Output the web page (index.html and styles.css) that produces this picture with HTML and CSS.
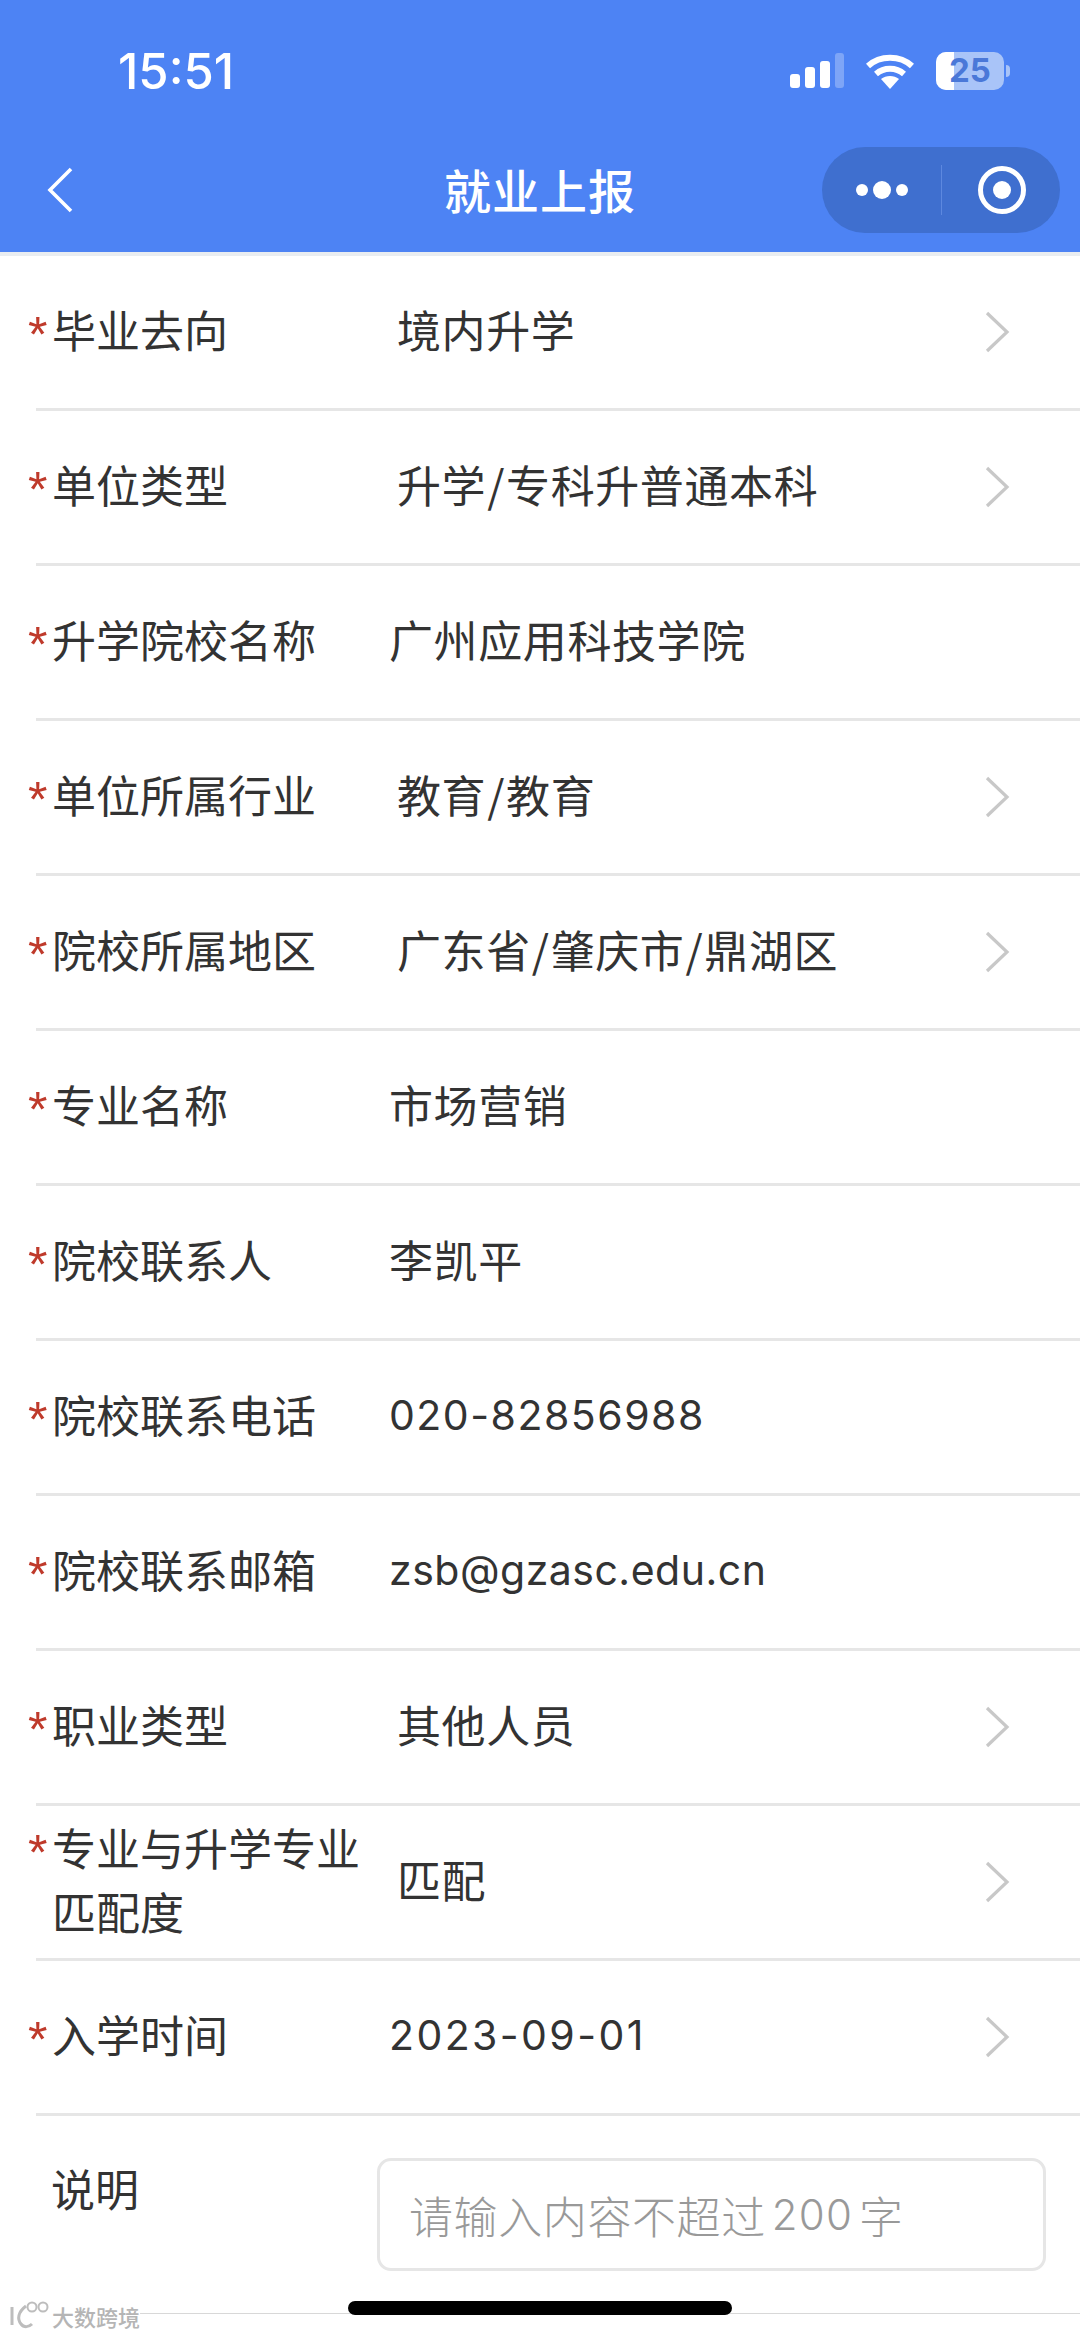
FILE: index.html
```html
<!DOCTYPE html>
<html lang="zh-CN">
<head>
<meta charset="utf-8">
<title>就业上报</title>
<link rel="stylesheet" href="styles.css">
</head>
<body>
<div class="screen">
  <header class="header">
    <div class="status">
      <span class="time">15:51</span>
      <div class="status-icons">
        <svg class="signal" width="54" height="36" viewBox="0 0 54 36"><rect x="0" y="21" width="10" height="14" rx="3" fill="#fff"/><rect x="15" y="14" width="10" height="21" rx="3" fill="#fff"/><rect x="30" y="8" width="10" height="27" rx="3" fill="#fff"/><rect x="45" y="0" width="9" height="35" rx="3" fill="#7ea5f7"/></svg>
        <svg class="wifi" width="48" height="36" viewBox="0 0 48 36"><path d="M2 13C14 2 34 2 46 13M10 21C18 14 30 14 38 21" fill="none" stroke="#fff" stroke-width="6"/><path d="M15 26C20 22 28 22 33 26L24 36Z" fill="#fff"/></svg>
        <div class="battery"><div class="battery-body"><div class="battery-fill"></div><span class="battery-num">25</span></div><div class="battery-tip"></div></div>
      </div>
    </div>
    <div class="nav">
      <svg class="back" width="26" height="46" viewBox="0 0 26 46"><path d="M24 2L3 23L24 44" fill="none" stroke="#fff" stroke-width="3.6"/></svg>
      <h1 class="title">就业上报</h1>
      <div class="capsule">
        <div class="dots"><i class="dot"></i><i class="dot dot-big"></i><i class="dot"></i></div>
        <div class="capsule-line"></div>
        <div class="target"><i class="target-core"></i></div>
      </div>
    </div>
  </header>
  <main class="form">
    <div class="row"><div class="label"><span class="star">*</span><span>毕业去向</span></div><div class="value select">境内升学</div><svg class="chev" width="26" height="42" viewBox="0 0 26 42"><path d="M3 2L23 21L3 40" fill="none" stroke="#c8c8c8" stroke-width="3.2"/></svg></div>
    <div class="row"><div class="label"><span class="star">*</span><span>单位类型</span></div><div class="value select">升学<span class="slash">/</span>专科升普通本科</div><svg class="chev" width="26" height="42" viewBox="0 0 26 42"><path d="M3 2L23 21L3 40" fill="none" stroke="#c8c8c8" stroke-width="3.2"/></svg></div>
    <div class="row"><div class="label"><span class="star">*</span><span>升学院校名称</span></div><div class="value">广州应用科技学院</div></div>
    <div class="row"><div class="label"><span class="star">*</span><span>单位所属行业</span></div><div class="value select">教育<span class="slash">/</span>教育</div><svg class="chev" width="26" height="42" viewBox="0 0 26 42"><path d="M3 2L23 21L3 40" fill="none" stroke="#c8c8c8" stroke-width="3.2"/></svg></div>
    <div class="row"><div class="label"><span class="star">*</span><span>院校所属地区</span></div><div class="value select">广东省<span class="slash">/</span>肇庆市<span class="slash">/</span>鼎湖区</div><svg class="chev" width="26" height="42" viewBox="0 0 26 42"><path d="M3 2L23 21L3 40" fill="none" stroke="#c8c8c8" stroke-width="3.2"/></svg></div>
    <div class="row"><div class="label"><span class="star">*</span><span>专业名称</span></div><div class="value">市场营销</div></div>
    <div class="row"><div class="label"><span class="star">*</span><span>院校联系人</span></div><div class="value">李凯平</div></div>
    <div class="row"><div class="label"><span class="star">*</span><span>院校联系电话</span></div><div class="value latin phone">020-82856988</div></div>
    <div class="row"><div class="label"><span class="star">*</span><span>院校联系邮箱</span></div><div class="value latin">zsb@gzasc.edu.cn</div></div>
    <div class="row"><div class="label"><span class="star">*</span><span>职业类型</span></div><div class="value select">其他人员</div><svg class="chev" width="26" height="42" viewBox="0 0 26 42"><path d="M3 2L23 21L3 40" fill="none" stroke="#c8c8c8" stroke-width="3.2"/></svg></div>
    <div class="row"><div class="label"><span class="star">*</span><span>专业与升学专业匹配度</span></div><div class="value select">匹配</div><svg class="chev" width="26" height="42" viewBox="0 0 26 42"><path d="M3 2L23 21L3 40" fill="none" stroke="#c8c8c8" stroke-width="3.2"/></svg></div>
    <div class="row"><div class="label"><span class="star">*</span><span>入学时间</span></div><div class="value latin date">2023-09-01</div><svg class="chev" width="26" height="42" viewBox="0 0 26 42"><path d="M3 2L23 21L3 40" fill="none" stroke="#c8c8c8" stroke-width="3.2"/></svg></div>
    <div class="note">
      <div class="note-label">说明</div>
      <div class="note-box">请输入内容不超过<span class="num">200</span>字</div>
    </div>
  </main>
  <div class="bottom-line"></div>
  <div class="home"></div>
  <div class="watermark"><svg width="40" height="30" viewBox="0 0 40 30"><path d="M2 6V24M16 5C8 11 7 18 11 23C14 27 19 26 22 23" fill="none" stroke="#bdbdbd" stroke-width="3"/><circle cx="22" cy="6" r="4.5" fill="none" stroke="#bdbdbd" stroke-width="2"/><circle cx="33" cy="6" r="4.5" fill="none" stroke="#bdbdbd" stroke-width="2"/></svg><span>大数跨境</span></div>
</div>
</body>
</html>
```
FILE: styles.css
```css
* { box-sizing: border-box; }
html, body { margin: 0; padding: 0; background: #fff; }
.screen {
  position: relative;
  width: 1080px;
  height: 2337px;
  overflow: hidden;
  font-family: "Inter", "Noto Sans CJK SC", sans-serif;
  color: #333;
}
.header { height: 252px; background: #4d83f4; color: #fff; display: flex; flex-direction: column; }
.status { height: 135px; display: flex; align-items: center; justify-content: space-between; padding: 16px 70px 8px 118px; }
.time { font-size: 49px; font-weight: 500; font-family: "Inter", sans-serif; }
.status-icons { display: flex; align-items: center; gap: 22px; margin-top: -2px; }
.battery { display: flex; align-items: center; gap: 2px; }
.battery-body { position: relative; width: 68px; height: 38px; border-radius: 10px; background: #a9c4f8; overflow: hidden; display: flex; align-items: center; justify-content: center; }
.battery-fill { position: absolute; left: 0; top: 0; bottom: 0; width: 18px; background: #fff; }
.battery-num { position: relative; font-size: 33px; font-weight: 700; line-height: 1; color: #4a78d8; }
.battery-tip { width: 4px; height: 12px; border-radius: 0 4px 4px 0; background: #a9c4f8; }
.nav { position: relative; flex: 1; display: flex; align-items: center; justify-content: space-between; padding: 0 20px 8px 47px; }
.title { position: absolute; left: 0; right: 0; top: 24px; margin: 0; text-align: center; font-size: 47px; line-height: 60px; font-weight: 500; letter-spacing: 1px; font-family: "Noto Sans CJK SC", sans-serif; }
.capsule { display: flex; align-items: center; width: 238px; height: 86px; border-radius: 43px; background: #3f6fcf; }
.dots { width: 119px; display: flex; align-items: center; justify-content: center; gap: 5px; }
.dot { width: 12px; height: 12px; border-radius: 50%; background: #fff; }
.dot-big { width: 18px; height: 18px; }
.capsule-line { width: 1px; height: 50px; background: #5d88df; }
.target { margin-left: 36px; width: 48px; height: 48px; border: 5px solid #fff; border-radius: 50%; display: flex; align-items: center; justify-content: center; }
.target-core { width: 18px; height: 18px; border-radius: 50%; background: #fff; }
.form { border-top: 4px solid #e9edf1; }
.row {
  height: 155px;
  margin-left: 36px;
  border-bottom: 3px solid #e6e6e6;
  display: flex;
  align-items: center;
  font-size: 44px;
  line-height: 64px;
  font-family: "Noto Sans CJK SC", sans-serif;
  font-weight: 400;
}
.label { width: 353px; margin-left: -8px; margin-right: 8px; flex: none; display: flex; align-items: flex-start; padding: 0 8px 7px 0; }
.star { width: 24px; flex: none; color: #bf3a2b; font-family: "Liberation Sans", sans-serif; font-size: 50px; line-height: 76px; height: 64px; }
.value { flex: 1; letter-spacing: 0.6px; padding-bottom: 7px; }
.slash { margin: 0 1px; }
.select { padding-left: 8px; }
.latin { font-family: "Inter", sans-serif; font-weight: 400; font-size: 41px; letter-spacing: 0.5px; color: #333; padding-bottom: 4px; }
.phone { letter-spacing: 1.5px; }
.date { letter-spacing: 2.4px; }
.chev { flex: none; margin-right: 70px; }
.note { display: flex; margin-left: 36px; padding: 42px 34px 0 15px; font-size: 44px; font-family: "Noto Sans CJK SC", sans-serif; font-weight: 400; }
.note-label { width: 326px; flex: none; line-height: 60px; }
.note-box { flex: 1; height: 113px; border: 3px solid #e6e6e6; border-radius: 14px; padding: 0 29px; display: flex; align-items: center; color: #999; letter-spacing: 0.6px; font-weight: 300; }
.num { font-family: "Inter", sans-serif; font-size: 42px; margin: 0 6px; letter-spacing: 1.2px; }
.bottom-line { position: absolute; left: 140px; right: 0; top: 2313px; height: 1px; background: #d8d8d8; }
.home { position: absolute; left: 348px; top: 2301px; width: 384px; height: 14px; border-radius: 7px; background: #000; }
.watermark { position: absolute; left: 10px; top: 2300px; display: flex; align-items: center; gap: 2px; font-size: 22px; font-weight: 500; color: #b5b5b5; text-shadow: 0 0 3px #fff; font-family: "Noto Sans CJK SC", sans-serif; }
```
